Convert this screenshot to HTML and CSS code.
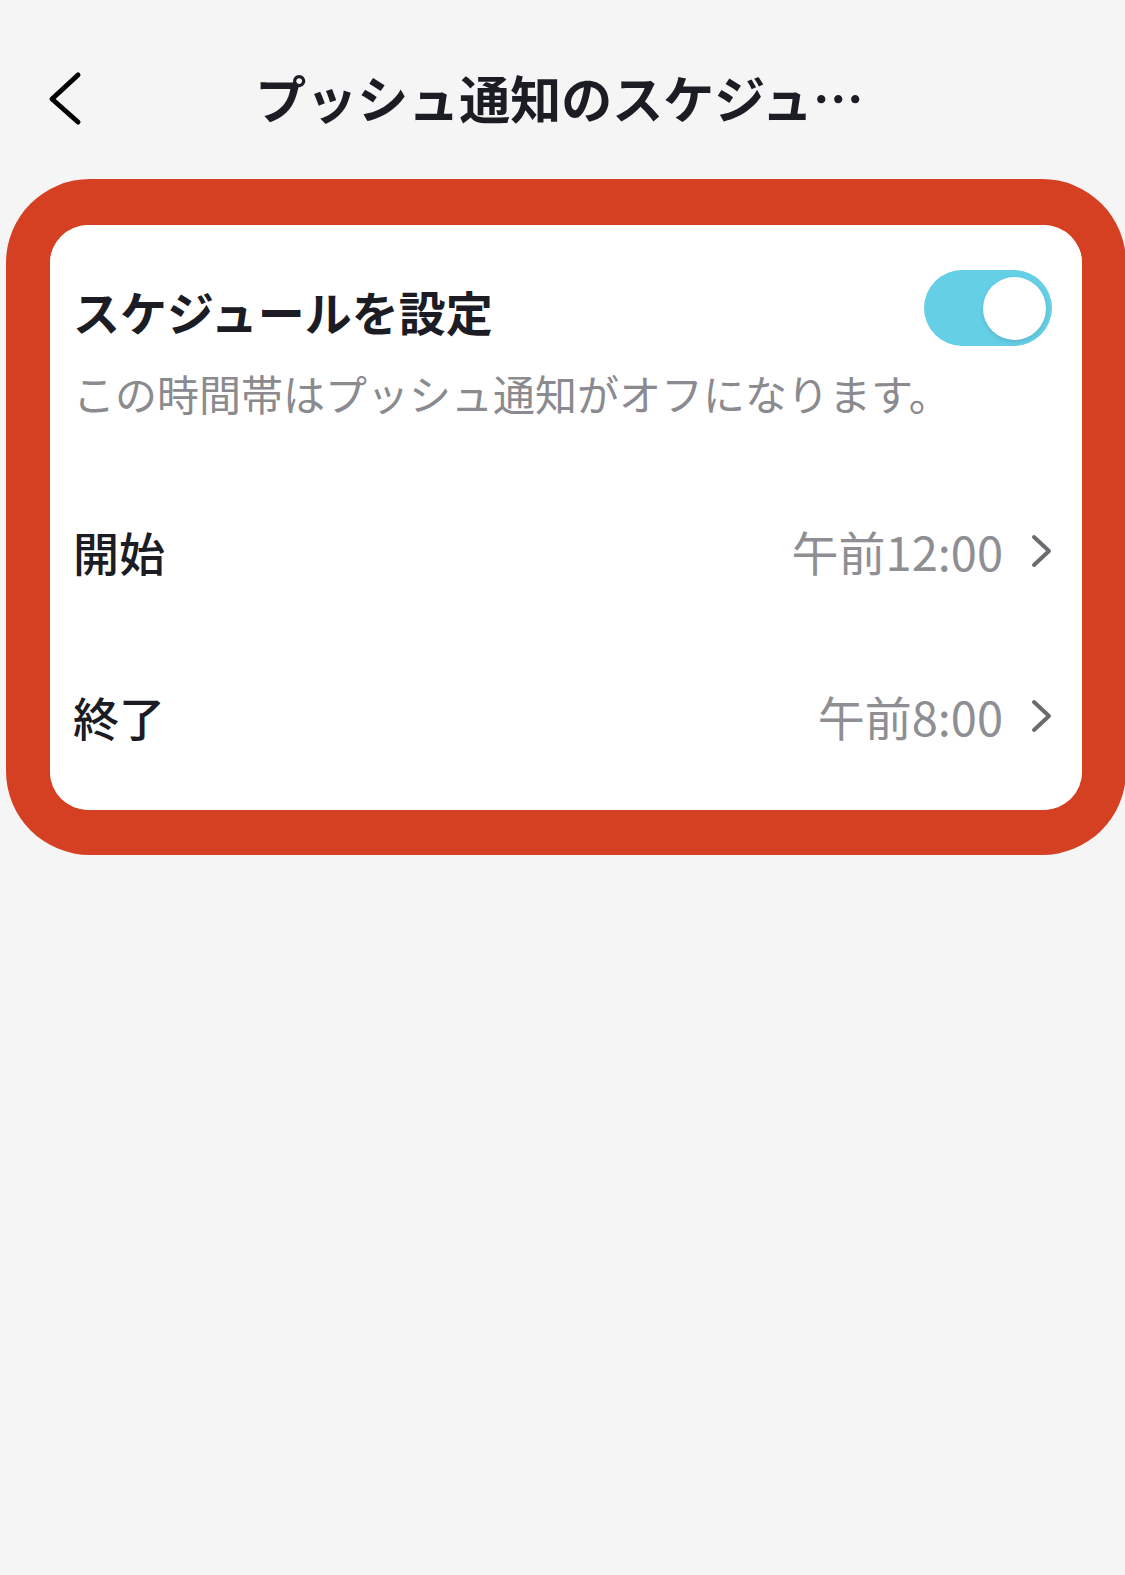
FILE: index.html
```html
<!DOCTYPE html>
<html lang="ja">
<head>
    <meta charset="UTF-8">
    <meta name="viewport" content="width=device-width, initial-scale=1.0">
    <title>プッシュ通知のスケジュール</title>
    <link rel="stylesheet" href="styles.css">
</head>
<body>
    <header class="nav">
        <button class="back" type="button" aria-label="戻る">
            <svg width="40" height="56" viewBox="0 0 40 56">
                <path d="M33 5 L7 29 L33 52" fill="none" stroke="#000" stroke-width="5" stroke-linecap="round" stroke-linejoin="round"/>
            </svg>
        </button>
        <h1 class="nav-title">プッシュ通知のスケジュ…</h1>
        <div></div>
    </header>

    <div class="highlight">
        <section class="card">
            <div class="card-head">
                <h2>スケジュールを設定</h2>
                <div class="toggle on" role="switch" aria-checked="true">
                    <span class="knob"></span>
                </div>
            </div>
            <p class="hint">この時間帯はプッシュ通知がオフになります。</p>

            <div class="rows">
                <div class="row">
                    <span class="label">開始</span>
                    <span class="value">午前12:00</span>
                    <svg class="chev" width="22" height="36" viewBox="0 0 22 36">
                        <path d="M4 4 L19 18 L4 32" fill="none" stroke="#6b6b70" stroke-width="4" stroke-linecap="round" stroke-linejoin="round"/>
                    </svg>
                </div>
                <div class="row">
                    <span class="label">終了</span>
                    <span class="value">午前8:00</span>
                    <svg class="chev" width="22" height="36" viewBox="0 0 22 36">
                        <path d="M4 4 L19 18 L4 32" fill="none" stroke="#6b6b70" stroke-width="4" stroke-linecap="round" stroke-linejoin="round"/>
                    </svg>
                </div>
            </div>
        </section>
    </div>
</body>
</html>
```

FILE: styles.css
```css
body {
    font-family: "Noto Sans CJK JP", "Noto Sans", sans-serif;
    background-color: #f5f5f5;
    margin: 0;
    overflow-x: hidden;
    color: #1c1c24;
}
.nav {
    display: grid;
    grid-template-columns: 1fr auto 1fr;
    align-items: center;
    height: 163px;
    padding: 16px 45px 0;
}
.back {
    display: flex;
    width: 40px;
    padding: 0;
    border: none;
    background: none;
    cursor: pointer;
}
.nav-title {
    margin: 0;
    font-size: 51px;
    font-weight: 700;
    line-height: 1.2;
    white-space: nowrap;
    position: relative;
    left: -3px;
}
.highlight {
    width: 1032px;
    margin-left: 6px;
    border-style: solid;
    border-color: #d64022;
    border-width: 46px 44px 45px 44px;
    border-radius: 84px;
}
.card {
    background: #ffffff;
    border-radius: 38px;
    padding: 45px 30px 12px 25px;
}
.card-head {
    display: flex;
    align-items: center;
    justify-content: space-between;
}
.card-head h2 {
    margin: 0;
    font-size: 47px;
    font-weight: 700;
    line-height: 1.2;
    position: relative;
    top: 3px;
    left: -2px;
}
.toggle {
    display: flex;
    justify-content: flex-end;
    align-items: center;
    box-sizing: border-box;
    width: 128px;
    height: 76px;
    padding: 0 6px;
    border-radius: 38px;
    background: #e4e4e8;
}
.toggle.on {
    background: #65cfe6;
}
.knob {
    width: 63px;
    height: 63px;
    border-radius: 50%;
    background: #ffffff;
    box-shadow: 0 2px 4px rgba(0, 0, 0, 0.12);
}
.hint {
    margin: 19px 0 0 -2px;
    font-size: 42px;
    line-height: 56px;
    color: #8a8a8f;
}
.rows {
    margin-top: 47px;
}
.row {
    display: flex;
    align-items: center;
    height: 165px;
}
.label {
    flex: 1;
    margin-left: -2px;
    font-size: 46px;
    font-weight: 500;
}
.value {
    font-size: 47px;
    color: #8e8e93;
    margin-right: 27px;
}
.chev {
    display: block;
}
```
